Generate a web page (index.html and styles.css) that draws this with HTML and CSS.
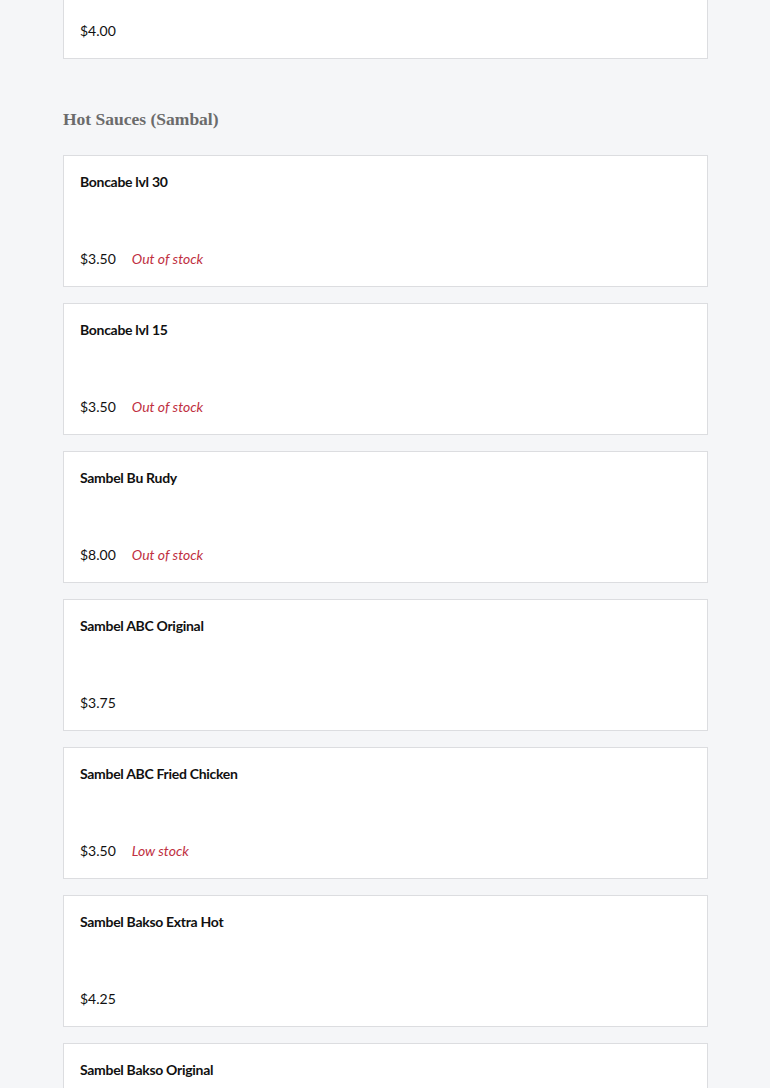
FILE: index.html
```html
<!DOCTYPE html>
<html>
<head>
<meta charset="utf-8">
<link rel="stylesheet" href="styles.css">
</head>
<body>
<main class="menu">
  <section class="section first">
    <div class="card">
      <div class="name">Es Teler</div>
      <div class="meta"><span class="price">$4.00</span></div>
    </div>
  </section>
  <section class="section">
    <h2 class="section-title">Hot Sauces (Sambal)</h2>
    <div class="list">
      <div class="card">
        <div class="name">Boncabe lvl 30</div>
        <div class="meta"><span class="price">$3.50</span><span class="stock">Out of stock</span></div>
      </div>
      <div class="card">
        <div class="name">Boncabe lvl 15</div>
        <div class="meta"><span class="price">$3.50</span><span class="stock">Out of stock</span></div>
      </div>
      <div class="card">
        <div class="name">Sambel Bu Rudy</div>
        <div class="meta"><span class="price">$8.00</span><span class="stock">Out of stock</span></div>
      </div>
      <div class="card">
        <div class="name">Sambel ABC Original</div>
        <div class="meta"><span class="price">$3.75</span></div>
      </div>
      <div class="card">
        <div class="name">Sambel ABC Fried Chicken</div>
        <div class="meta"><span class="price">$3.50</span><span class="stock">Low stock</span></div>
      </div>
      <div class="card">
        <div class="name">Sambel Bakso Extra Hot</div>
        <div class="meta"><span class="price">$4.25</span></div>
      </div>
      <div class="card">
        <div class="name">Sambel Bakso Original</div>
        <div class="meta"><span class="price">$4.25</span></div>
      </div>
    </div>
  </section>
</main>
</body>
</html>
```

FILE: styles.css
```css
html, body {
  margin: 0;
  padding: 0;
  background: #f5f6f8;
}
body {
  font-family: Lato, "Noto Sans", sans-serif;
  font-size: 14px;
  color: #111;
  overflow: hidden;
  height: 1088px;
}
.menu {
  width: 645px;
  margin: -73px auto 0;
  padding-left: 1px;
}
.section-title {
  margin: 48px 0 24px;
  font-family: "Liberation Serif", serif;
  font-weight: bold;
  font-size: 17.5px;
  line-height: 24px;
  color: #6b6b6b;
}
.list {
  display: flex;
  flex-direction: column;
  gap: 16px;
}
.card {
  background: #fff;
  border: 1px solid #dcdde0;
  padding: 16px;
  height: 98px;
  display: flex;
  flex-direction: column;
  justify-content: space-between;
}
.name {
  font-weight: bold;
  line-height: 20px;
  letter-spacing: -0.3px;
}
.meta {
  display: flex;
  gap: 16px;
  line-height: 20px;
  margin-bottom: 1px;
}
.stock {
  font-style: italic;
  color: #c0303f;
}
```
